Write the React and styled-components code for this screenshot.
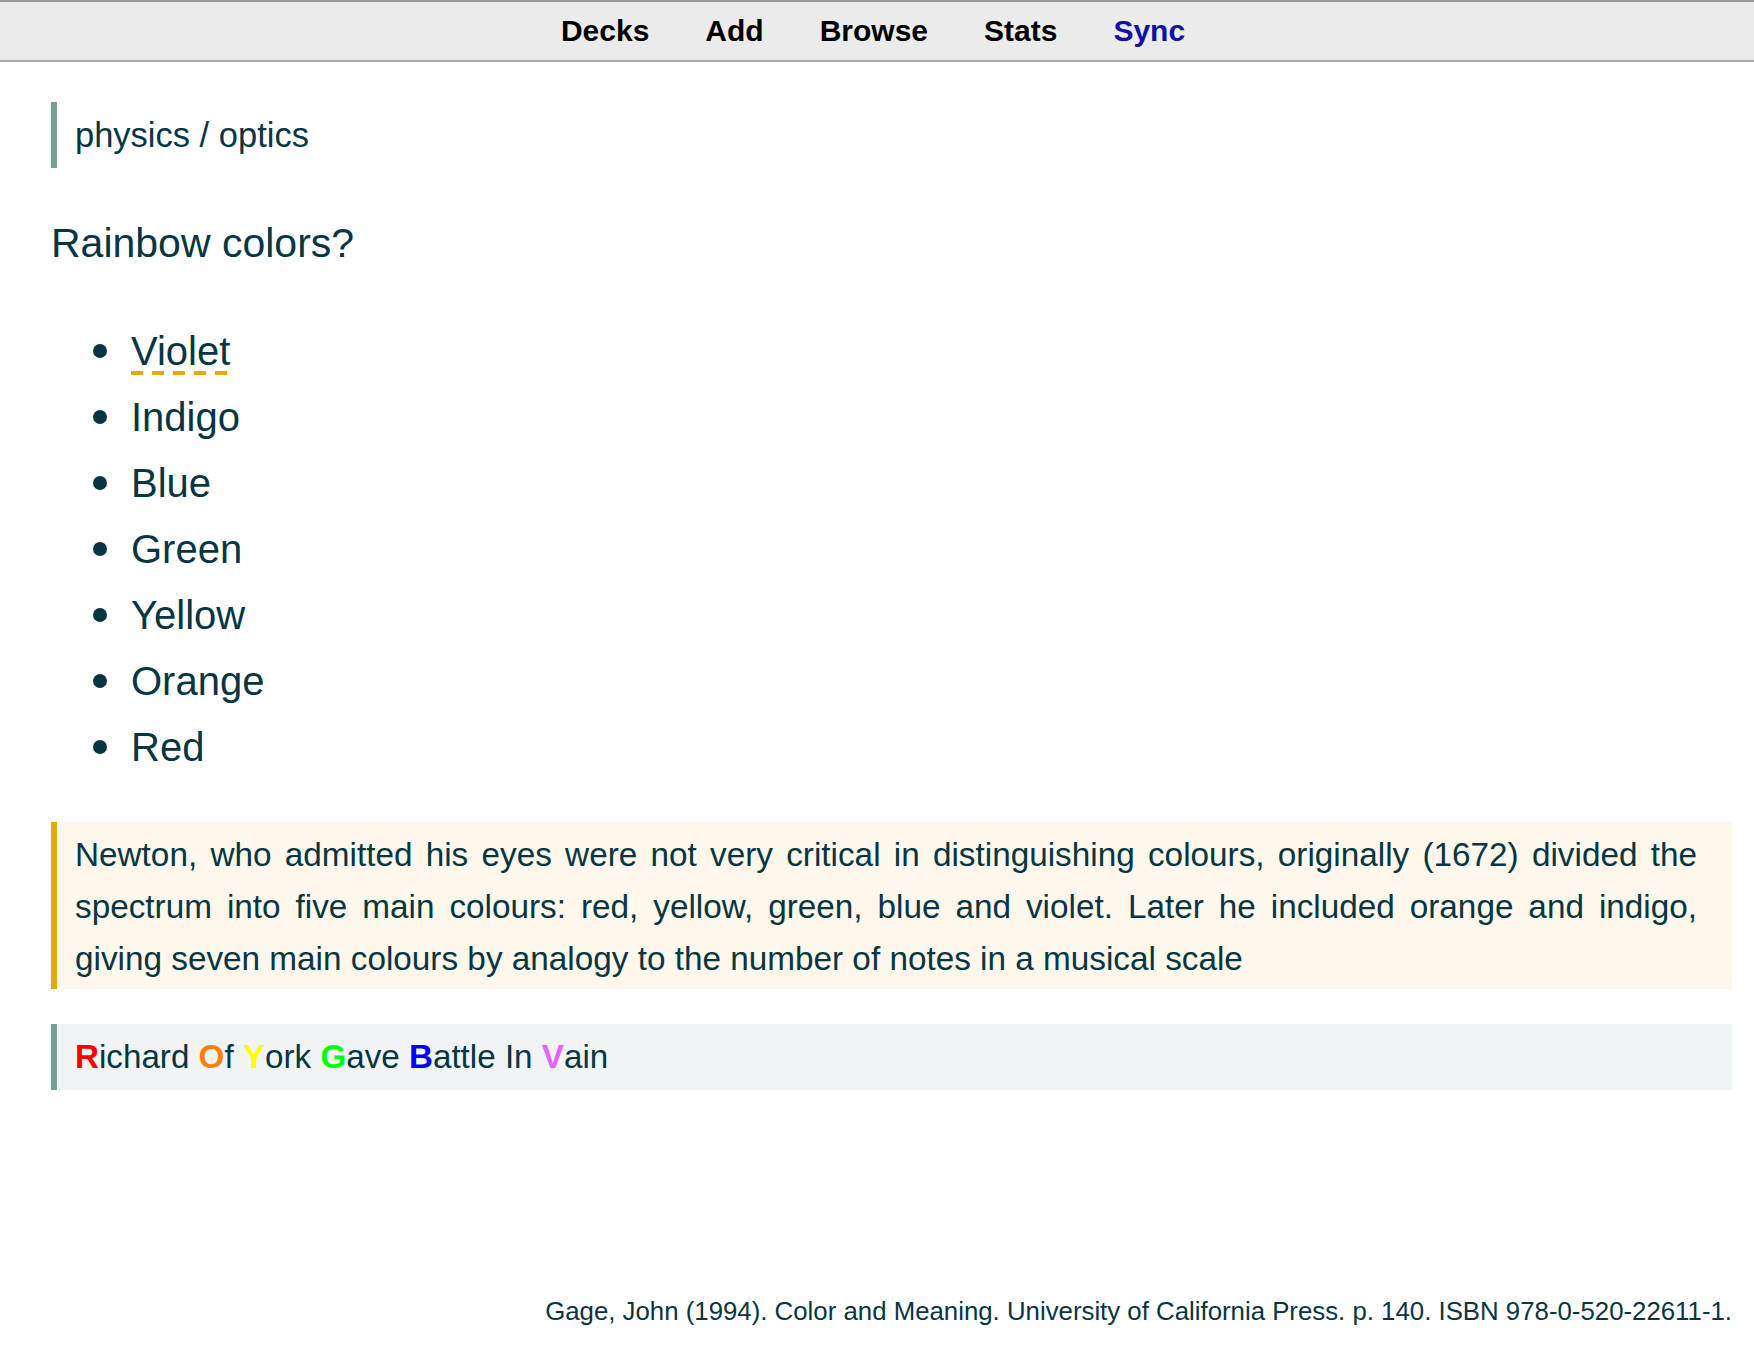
import React from "react";
import styled, { createGlobalStyle } from "styled-components";

const GlobalStyle = createGlobalStyle`
  body {
    margin: 0;
    background: #ffffff;
    font-family: "Liberation Sans", Arial, sans-serif;
    font-weight: normal;
    color: #073642;
  }
`;

const navItems = [
  { label: "Decks" },
  { label: "Add" },
  { label: "Browse" },
  { label: "Stats" },
  { label: "Sync", active: true },
];

const colors = ["Violet", "Indigo", "Blue", "Green", "Yellow", "Orange", "Red"];

const mnemonic = [
  { cap: "R", rest: "ichard", color: "#ff0000" },
  { cap: "O", rest: "f", color: "#ff7f00" },
  { cap: "Y", rest: "ork", color: "#ffff00" },
  { cap: "G", rest: "ave", color: "#00ff00" },
  { cap: "B", rest: "attle", color: "#0000ff" },
  { cap: "", rest: "In" },
  { cap: "V", rest: "ain", color: "#e066ff" },
];

export default function App() {
  return (
    <>
      <GlobalStyle />
      <TopBar>
        {navItems.map((item) => (
          <NavLink key={item.label} active={item.active}>
            {item.label}
          </NavLink>
        ))}
      </TopBar>
      <Card>
        <Tags>physics / optics</Tags>
        <Question>Rainbow colors?</Question>
        <List>
          {colors.map((c, i) => (
            <Item key={c}>
              <Dot />
              {i === 0 ? <Marked>{c}</Marked> : c}
            </Item>
          ))}
        </List>
        <Note>
          Newton, who admitted his eyes were not very critical in
          distinguishing colours, originally (1672) divided the spectrum into
          five main colours: red, yellow, green, blue and violet. Later he
          included orange and indigo, giving seven main colours by analogy to
          the number of notes in a musical scale
        </Note>
        <Mnemonic>
          {mnemonic.map((w, i) => (
            <React.Fragment key={i}>
              {i > 0 && " "}
              {w.cap && <Cap color={w.color}>{w.cap}</Cap>}
              {w.rest}
            </React.Fragment>
          ))}
        </Mnemonic>
        <Source>
          Gage, John (1994). Color and Meaning. University of California Press.
          p. 140. ISBN 978-0-520-22611-1.
        </Source>
      </Card>
    </>
  );
}

const TopBar = styled.div`
  height: 58px;
  display: flex;
  justify-content: center;
  align-items: center;
  padding-right: 8px;
  background-color: #ebebeb;
  border-top: 2px solid #9a9a9a;
  border-bottom: 2px solid #a8a8a8;
`;

const NavLink = styled.a`
  font-family: "Liberation Sans", Arial, sans-serif;
  font-weight: bold;
  font-size: 30px;
  padding: 0 28px;
  color: ${(props) => (props.active ? "#1010a8" : "#000000")};
  cursor: pointer;
`;

const Card = styled.div`
  padding: 40px 22px 0 51px;
`;

const Tags = styled.div`
  height: 66px;
  display: flex;
  align-items: center;
  padding-left: 18px;
  border-left: 6px solid #75a095;
  font-size: 34.5px;
`;

const Question = styled.div`
  margin-top: 48px;
  font-size: 41px;
  line-height: 54px;
`;

const List = styled.ul`
  margin: 48px 0 0;
  padding: 0;
  list-style: none;
`;

const Item = styled.li`
  display: flex;
  align-items: center;
  height: 66px;
  font-size: 40px;
`;

const Dot = styled.span`
  width: 14px;
  height: 14px;
  border-radius: 50%;
  background-color: #073642;
  margin-left: 42px;
  margin-right: 24px;
  flex-shrink: 0;
`;

const Marked = styled.span`
  position: relative;
  display: inline-block;
  line-height: 1;

  &::after {
    content: "";
    position: absolute;
    left: 0;
    right: 0;
    bottom: -4px;
    height: 4px;
    background: repeating-linear-gradient(
      90deg,
      #e3ab00 0 12px,
      transparent 12px 21px
    );
  }
`;

const Note = styled.div`
  margin-top: 42px;
  padding: 7px 35px 4px 18px;
  border-left: 6px solid #e3ab00;
  background-color: #fdf7ec;
  font-size: 33.3px;
  line-height: 52px;
  text-align: justify;
`;

const Mnemonic = styled.div`
  margin-top: 35px;
  padding: 0 18px;
  border-left: 6px solid #75a095;
  background-color: #f1f4f5;
  font-size: 33.2px;
  line-height: 66px;
`;

const Cap = styled.b`
  font-weight: 700;
  color: ${(props) => props.color};
`;

const Source = styled.div`
  margin-top: 203px;
  text-align: right;
  font-size: 25.8px;
  line-height: 36px;
`;
